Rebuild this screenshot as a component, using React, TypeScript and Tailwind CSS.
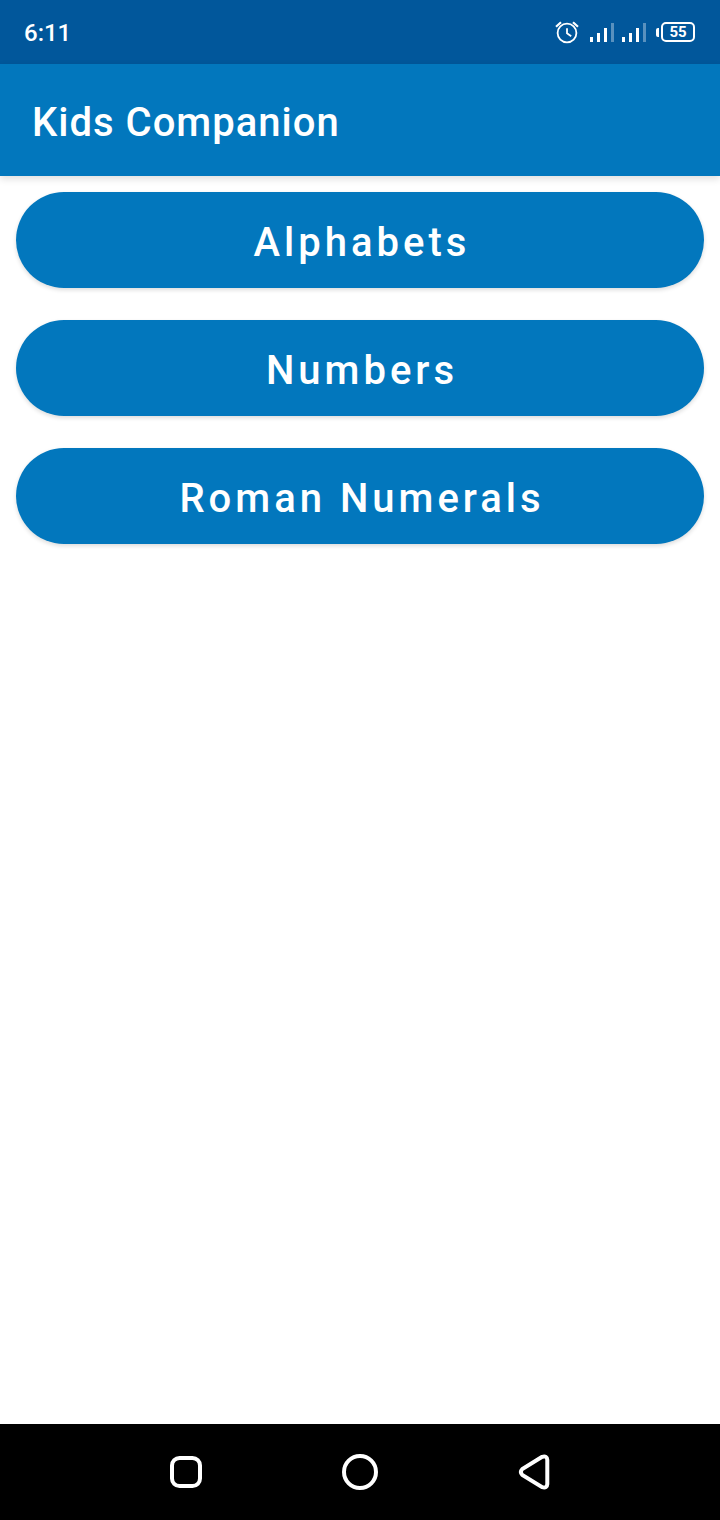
const activities = ["Alphabets", "Numbers", "Roman Numerals"];

function AlarmIcon() {
  return (
    <svg width="24" height="24" viewBox="0 0 24 24" fill="none" stroke="white" aria-hidden="true">
      <circle cx="12" cy="13" r="9.4" strokeWidth="1.8" />
      <path d="M12 8.3V13.2L16.2 16.2" strokeWidth="1.8" />
      <path d="M1 6.8L6 2.2M23 6.8L18 2.2" strokeWidth="2.2" />
    </svg>
  );
}

function SignalIcon() {
  return (
    <svg width="24" height="20" viewBox="0 0 24 20" fill="white" aria-hidden="true">
      <rect x="0" y="15" width="3" height="5" />
      <rect x="7" y="11" width="3" height="9" />
      <rect x="14" y="6" width="3" height="14" />
      <rect x="21" y="1" width="3" height="19" opacity="0.35" />
    </svg>
  );
}

function Battery({ level }: { level: number }) {
  return (
    <div className="flex items-center gap-0.5">
      <span className="h-[9px] w-[3px] rounded-l-xs bg-white" />
      <span className="flex h-5 w-[34px] items-center justify-center rounded-[5px] border-2 border-white text-[15px] leading-none font-bold">
        {level}
      </span>
    </div>
  );
}

function StatusBar() {
  return (
    <div className="flex h-16 items-center justify-between bg-[#01579b] pr-[25px] pl-6">
      <span className="pt-0.5 text-2xl leading-8 font-medium">6:11</span>
      <div className="flex items-center">
        <AlarmIcon />
        <div className="mr-2.5 ml-[11px] flex gap-2">
          <SignalIcon />
          <SignalIcon />
        </div>
        <Battery level={55} />
      </div>
    </div>
  );
}

function NavigationBar() {
  return (
    <nav className="grid h-24 grid-cols-3 bg-black px-[99px]">
      <button type="button" aria-label="Recent apps" className="flex items-center justify-center">
        <svg width="32" height="32" viewBox="0 0 32 32" fill="none" stroke="white" strokeWidth="4">
          <rect x="2" y="2" width="28" height="28" rx="7.5" />
        </svg>
      </button>
      <button type="button" aria-label="Home" className="flex items-center justify-center">
        <svg width="36" height="36" viewBox="0 0 36 36" fill="none" stroke="white" strokeWidth="4">
          <circle cx="18" cy="18" r="16" />
        </svg>
      </button>
      <button type="button" aria-label="Back" className="flex items-center justify-center">
        <svg width="32" height="36" viewBox="0 0 32 36" fill="none" stroke="white" strokeWidth="4">
          <path d="M24.2 2.8L4.3 15Q1.5 18 4.3 21L24.2 33.2Q29 34.6 29.3 30V6Q29 1.4 24.2 2.8Z" />
        </svg>
      </button>
    </nav>
  );
}

export default function App() {
  return (
    <div className="flex min-h-screen flex-col bg-white font-[Roboto,sans-serif] text-white">
      <StatusBar />
      <header className="flex h-28 items-center bg-[#0277bd] px-8 pt-1.5 shadow-[0_3px_7px_rgba(0,0,0,0.13)]">
        <h1 className="text-[40px] leading-12 font-medium tracking-wide">Kids Companion</h1>
      </header>
      <main className="flex flex-1 flex-col gap-8 p-4">
        {activities.map((name) => (
          <button
            key={name}
            type="button"
            className="flex h-24 items-center justify-center rounded-full bg-[#0277bd] pt-1.5 pl-1 text-[40px] leading-12 font-medium tracking-widest shadow-[0_2px_4px_rgba(0,0,0,0.14)]"
          >
            {name}
          </button>
        ))}
      </main>
      <NavigationBar />
    </div>
  );
}
